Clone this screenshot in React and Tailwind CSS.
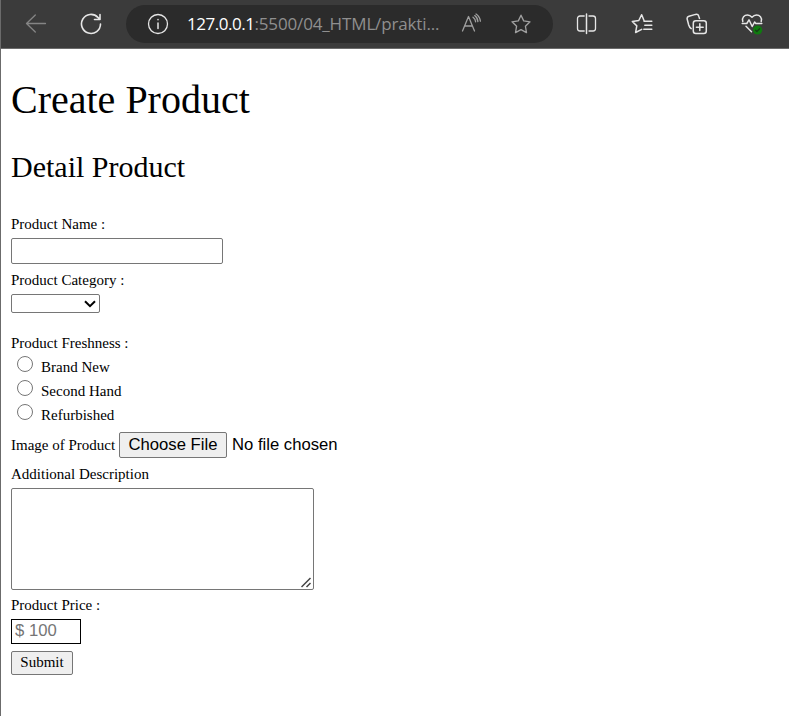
const iconProps = {
  fill: "none",
  stroke: "currentColor",
  strokeWidth: 1.3,
  strokeLinecap: "round",
  strokeLinejoin: "round",
  className: "block shrink-0",
};

const STAR = "M10 1.2l2.7 5.7 6.3.9-4.6 4.4 1.1 6.4L10 15.6l-5.5 3 1.1-6.4L1 7.800l6.300-.9z";

function Icon({ children, size = 22, box = "0 0 22 22" }) {
  return (
    <svg {...iconProps} width={size} height={size} viewBox={box}>
      {children}
    </svg>
  );
}

function Toolbar() {
  return (
    <header className="flex h-[49px] items-center border-b border-l border-[#6b6b6b] bg-[#3b3b3b] text-[#e6e6e6]">
      <div className="ml-[24px] text-[#858585]">
        <Icon>
          <path d="M20.5 10.5H1.5M10.3 2L1.5 10.5l8.8 8.5" />
        </Icon>
      </div>
      <div className="ml-[33px]">
        <Icon>
          <path strokeWidth="1.6" d="M20.5 11a9.5 9.5 0 1 1-2.6-6.6L20 6.5M20 1.5v5h-5.5" />
        </Icon>
      </div>
      <div className="ml-[24px] flex h-[38px] w-[427px] items-center rounded-full bg-[#2b2b2b]">
        <div className="ml-[21px]">
          <Icon>
            <circle cx="11" cy="11" r="9.5" />
            <path strokeWidth="1.5" d="M11 10v5.5M11 6.6v.2" />
          </Icon>
        </div>
        <div className="ml-[18px] w-[257px] whitespace-nowrap font-['Open_Sans',sans-serif] text-[17px] leading-[24px] tracking-[-0.14px] text-[#8f8f8f]">
          <span className="tracking-[-0.48px] text-white">127.0.0.1</span>:5500/04_HTML/prakti...
        </div>
        <div className="ml-[17px] text-[#a0a0a0]">
          <Icon>
            <path d="M1.500 18L7.500 3.500 13.500 18M3.600 13h7.800M12 4.200a6 6 0 0 1 2.600 4.600M13.700 2.600a8 8 0 0 1 3.200 6M15 1a10 10 0 0 1 4.400 7.200" />
          </Icon>
        </div>
        <div className="ml-[27px] text-[#a0a0a0]">
          <Icon box="-1 -1 22 22">
            <path d={STAR} />
          </Icon>
        </div>
      </div>
      <div className="ml-[23px]">
        <Icon>
          <path d="M8.2 3H4A2.5 2.5 0 0 0 1.5 5.500v10A2.500 2.500 0 0 0 4 18h4.200M13 3H17a2.500 2.500 0 0 1 2.500 2.500v10A2.500 2.500 0 0 1 17 18h-4" />
          <path strokeWidth="1.500" d="M10.500 1v19.500" />
        </Icon>
      </div>
      <div className="ml-[33px]">
        <Icon>
          <path strokeWidth="1.500" d="M13 7.500L10.700 1.700 7.800 7.500l-6.500 1 4.500 4.400-1.200 6.600 6.100-3.200M13 8.200h7.800M13.800 12.200h7M12.800 16.200h8" />
        </Icon>
      </div>
      <div className="ml-[33px]">
        <Icon>
          <rect x="7.300" y="7.800" width="13" height="12.700" rx="2.500" strokeWidth="1.500" />
          <path strokeWidth="1.500" d="M13.800 10.800v6.700M10.400 14.200h6.800M5.200 15.600C3.700 14.600 3.100 13.400 2.700 12L1.200 6.200C.8 4.600 1.700 3.600 3 3.200L9.500 1.400c1.700-.4 2.900.4 3.300 1.800l.7 2.200" />
        </Icon>
      </div>
      <div className="ml-[33px]">
        <Icon>
          <path strokeWidth="1.500" d="M1.800 8.500C.5 4.500 3.500 2 6.500 2c2 0 3.300.9 4.500 2.300C12.200 2.900 13.500 2 15.500 2c3 0 6 2.500 4.700 6.500M1.200 10.500h4.600l2.200-3.700 3.200 6.700 2.400-4.500 1.200 1.500h6M5 13.300l5.500 5.400" />
          <circle cx="16.600" cy="17" r="4.600" fill="#0f7b0f" stroke="none" />
          <path stroke="#163d16" d="M14.600 17.200l1.300 1.300 2.700-2.800" />
        </Icon>
      </div>
    </header>
  );
}

function Freshness({ label }) {
  return (
    <label className="flex h-[24px] items-start">
      <input
        type="radio"
        name="freshness"
        className="ml-[6px] mt-[-0.5px] size-[16px] shrink-0 appearance-none rounded-full border border-[#767676] bg-white"
      />
      <span className="ml-[8px] mt-[2px]">{label}</span>
    </label>
  );
}

export default function App() {
  return (
    <div className="flex h-[716px] w-[789px] flex-col overflow-hidden bg-white">
      <Toolbar />
      <form className="flex flex-1 flex-col items-start border-l border-[#6b6b6b] pl-[10px] font-['Liberation_Serif',serif] text-[15px] leading-[18px] text-black">
        <h1 className="mt-[28px] text-[40px] leading-[46px]">Create Product</h1>
        <h2 className="mt-[27px] text-[30px] leading-[34px]">Detail Product</h2>

        <label htmlFor="name" className="mt-[31px]">Product Name :</label>
        <input id="name" className="mt-[5px] h-[26px] w-[212px] rounded-[2px] border border-[#767676]" />

        <label className="mt-[7px]">Product Category :</label>
        <div className="mt-[5px] flex h-[19px] w-[89px] items-center justify-end rounded-[2px] border border-[#767676] pr-[3px]">
          <svg width="12" height="8" viewBox="0 0 12 8" fill="none" stroke="#000" strokeWidth="2">
            <path d="M1 1.200l5 5 5-5" />
          </svg>
        </div>

        <p className="mt-[21px]">Product Freshness :</p>
        <div className="mt-[4px] flex flex-col">
          <Freshness label="Brand New" />
          <Freshness label="Second Hand" />
          <Freshness label="Refurbished" />
        </div>

        <div className="mt-[4px] flex h-[26px] items-start">
          <span className="mt-[4px] w-[108px]">Image of Product</span>
          <button
            type="button"
            className="flex h-[26px] w-[108px] items-start justify-center whitespace-nowrap rounded-[2px] border border-[#767676] bg-[#efefef] font-['Liberation_Sans',sans-serif] text-[16.67px] leading-[23px]"
          >
            Choose File
          </button>
          <span className="ml-[5px] mt-px font-['Liberation_Sans',sans-serif] text-[16.67px] leading-[23px]">
            No file chosen
          </span>
        </div>

        <label htmlFor="description" className="mt-[7px]">Additional Description</label>
        <div className="mt-[5px] flex h-[102px] w-[303px] items-end justify-end rounded-[2px] border border-[#767676] p-px">
          <svg width="11" height="11" viewBox="0 0 11 11" fill="none" stroke="#444" strokeWidth="1.500">
            <path d="M.5 10L9.500 1M5.500 10l4-4" />
          </svg>
        </div>

        <label htmlFor="price" className="mt-[6px]">Product Price :</label>
        <input
          id="price"
          placeholder="$ 100"
          className="mt-[5px] h-[25px] w-[70px] border border-black pb-[2px] pl-[3px] font-['Liberation_Sans',sans-serif] text-[16.67px] leading-[20px] placeholder:text-[#757575]"
        />
        <button
          type="button"
          className="mt-[7px] flex h-[24px] w-[62px] items-start justify-center rounded-[2px] border border-[#767676] bg-[#efefef] leading-[20px]"
        >
          Submit
        </button>
      </form>
    </div>
  );
}
